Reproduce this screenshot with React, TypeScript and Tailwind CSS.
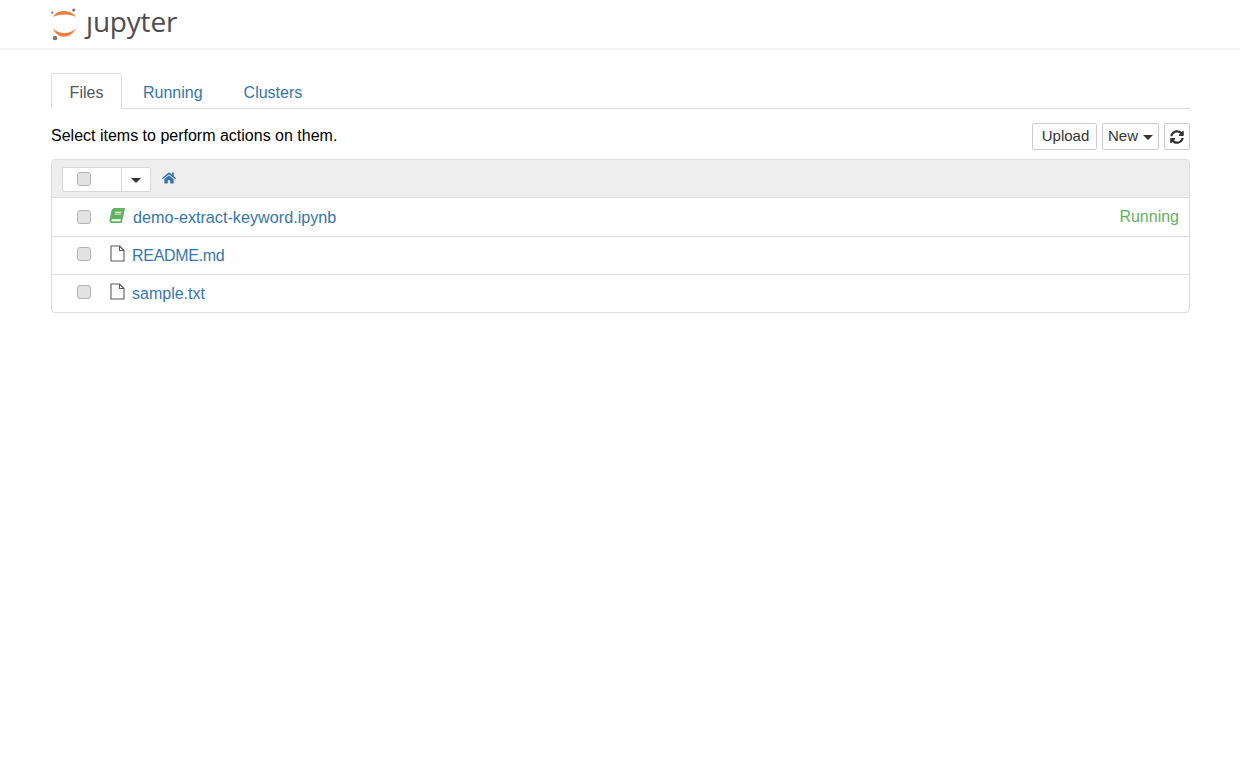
import React from "react";
import { FaBook, FaHome, FaSyncAlt } from "react-icons/fa";

const LINK = "text-[#3676ab]";

const Check = ({ className = "" }: { className?: string }) => (
  <span className={`block w-[14px] h-[14px] rounded-[3px] border border-[#b4b4b4] bg-[#e2e2e2] ${className}`} />
);

const FileIcon = () => (
  <svg width="15" height="17" viewBox="0 0 15 17" fill="none" stroke="#5a5a5a" strokeWidth="1.1" strokeLinejoin="round">
    <path d="M1 1 H9.5 L14 5.5 V16 H1 Z" />
    <path d="M9.5 1 V5.5 H14" />
  </svg>
);

const Row = ({ icon, iconClass, name, nameClass, checkClass, status, h }: { icon: React.ReactNode; iconClass: string; name: string; nameClass: string; checkClass: string; status?: string; h: string }) => (
  <div className={`flex items-center border-t border-[#dddddd] pl-[25px] pr-[10px] ${h}`}>
    <Check className={checkClass} />
    <span className={`ml-[17px] w-[18px] flex justify-center ${iconClass}`}>{icon}</span>
    <a className={`${nameClass} ${LINK}`}>{name}</a>
    {status && <span className="ml-auto text-[#62b162]">{status}</span>}
  </div>
);

export default function App() {
  return (
    <div className="min-h-[775px] bg-white text-[16px] leading-[22px] text-[#000]" style={{ fontFamily: '"Liberation Sans", Arial, sans-serif' }}>
      <header className="h-[50px] border-b-2 border-[#f2f2f2] pl-[51px] pt-[6px] flex items-start">
        <svg width="27" height="36" viewBox="0 0 27 36" className="shrink-0">
          <path d="M2 11 C6 3 20 3 25 11 C20 7.5 7 7.5 2 11 Z" fill="#ee7f3a" />
          <path d="M1.7 22 C6 33.6 20 33.6 25 22 C20 28.7 7 28.7 1.7 22 Z" fill="#ee7f3a" />
          <circle cx="22.7" cy="4" r="1.6" fill="#767677" />
          <circle cx="1.3" cy="6.7" r="1.1" fill="#767677" />
          <circle cx="4" cy="32" r="2.3" fill="#767677" />
        </svg>
        <span className="ml-[8px] -mt-[2px] text-[28px] leading-[34px] tracking-[-0.2px] text-[#4e4e4e]" style={{ fontFamily: '"Open Sans", sans-serif' }}>
          <span className="inline-block [clip-path:inset(12px_-4px_-10px_-8px)]">j</span>upyter
        </span>
      </header>

      <main className="mx-[51px] w-[1139px]">
        <nav className="mt-[23px] h-[36px] flex items-end border-b border-[#dddddd]">
          <a className="h-[36px] w-[71px] pt-[4px] flex items-center justify-center border border-[#dddddd] border-b-white rounded-t-[4px] bg-white text-[#555555] -mb-[1px]">Files</a>
          <a className={`ml-[21px] h-[36px] pt-[6px] flex items-center ${LINK}`}>Running</a>
          <a className={`ml-[41px] h-[36px] pt-[6px] flex items-center ${LINK}`}>Clusters</a>
        </nav>

        <div className="mt-[12px] h-[36px] flex items-start justify-between">
          <p className="m-0 mt-[4px]">Select items to perform actions on them.</p>
          <div className="flex items-start mt-[2px] text-[15px] text-[#333333]">
            <button className="h-[27px] w-[65px] pl-[2px] pb-[2px] border border-[#cccccc] rounded-[2px] bg-white">Upload</button>
            <button className="ml-[5px] h-[27px] w-[57px] pb-[2px] border border-[#cccccc] rounded-[2px] bg-white flex items-center justify-center">
              New
              <span className="ml-[5px] mt-[3px] w-0 h-0 border-x-[5px] border-x-transparent border-t-[5px] border-t-[#333333]" />
            </button>
            <button className="ml-[5px] h-[27px] w-[26px] border border-[#cccccc] rounded-[2px] bg-white flex items-center justify-center">
              <FaSyncAlt className="w-[14px] h-[14px]" />
            </button>
          </div>
        </div>

        <section className="mt-[2px] border border-[#dddddd] rounded-[4px] overflow-hidden">
          <div className="h-[37px] bg-[#eeeeee] flex items-center pl-[10px]">
            <div className="flex h-[25px] w-[89px] mt-[1px] border border-[#d8d8d8] rounded-[2px] bg-white">
              <span className="w-[58px] flex items-center pl-[14px]"><Check /></span>
              <span className="flex-1 border-l border-[#d8d8d8] flex items-center justify-center">
                <span className="mt-[2px] w-0 h-0 border-x-[5px] border-x-transparent border-t-[5px] border-t-[#333333]" />
              </span>
            </div>
            <FaHome className={`ml-[11px] -mt-[1px] w-[14px] h-[14px] ${LINK}`} />
          </div>
          <Row h="h-[39px]" checkClass="-mt-[1px]" iconClass="-mt-[3px]" nameClass="ml-[7px] -mt-[1px] text-[16.2px]" icon={<FaBook className="w-[14px] h-[15px] text-[#62b162] -skew-x-12" />} name="demo-extract-keyword.ipynb" status="Running" />
          <Row h="h-[38px]" checkClass="-mt-[3px]" iconClass="-mt-[5px]" nameClass="ml-[6px] tracking-[-0.3px]" icon={<FileIcon />} name="README.md" />
          <Row h="h-[38px]" checkClass="-mt-[3px]" iconClass="-mt-[5px]" nameClass="ml-[6px]" icon={<FileIcon />} name="sample.txt" />
        </section>
      </main>
    </div>
  );
}
